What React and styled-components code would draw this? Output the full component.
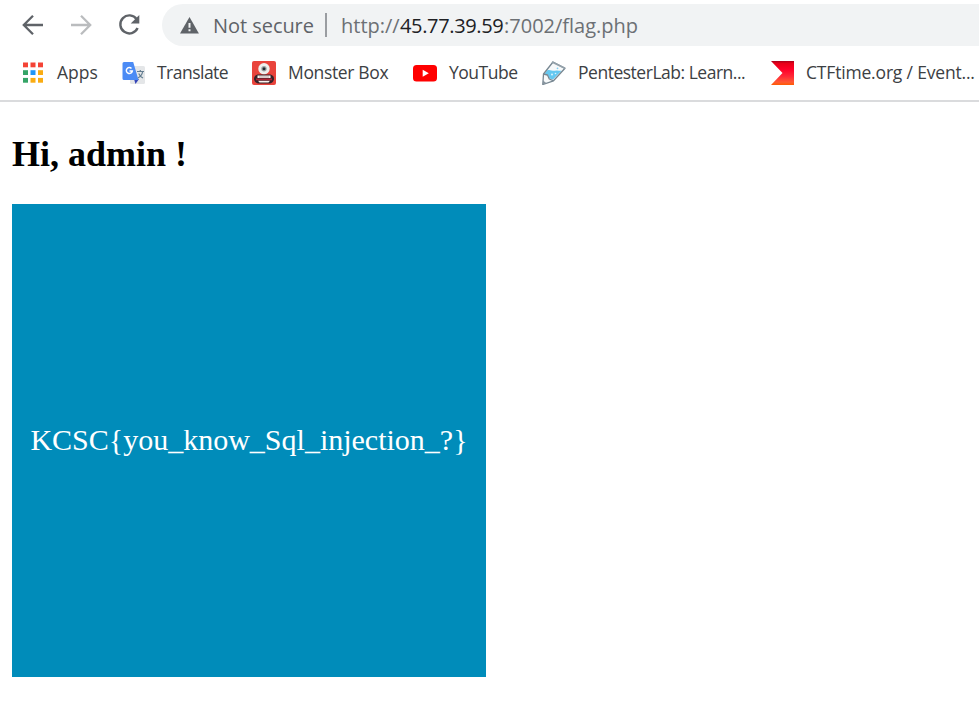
import React from 'react';
import styled, { createGlobalStyle } from 'styled-components';

const GlobalStyle = createGlobalStyle`
  * { box-sizing: border-box; }
  body { margin: 0; background: #fff; overflow: hidden; }
`;

const Window = styled.div`
  width: 979px;
  height: 710px;
  overflow: hidden;
  background: #fff;
  font-family: 'Open Sans', 'Noto Sans', sans-serif;
`;

const Toolbar = styled.div`
  display: flex;
  align-items: center;
  height: 50px;
  padding-left: 21px;
`;

const NavButton = styled.button`
  display: flex;
  width: 24px;
  height: 24px;
  margin-right: 24px;
  padding: 0;
  border: 0;
  background: none;
  flex: none;
  color: ${(p) => (p.$muted ? '#babcbe' : '#5f6368')};
`;

const AddressBar = styled.div`
  display: flex;
  align-items: center;
  flex: 1;
  height: 42px;
  margin-left: -3px;
  padding-left: 18px;
  border-radius: 21px 0 0 21px;
  background: #f1f3f4;
  color: #5f6368;
  font-size: 20px;
  line-height: 42px;
  white-space: nowrap;
`;

const Security = styled.span`
  width: 101px;
  margin-left: 9px;
  padding-top: 2px;
  letter-spacing: ${(p) => p.$spacing}px;
`;

const Divider = styled.span`
  width: 2px;
  height: 24px;
  margin: 0 14px 0 11px;
  background: #9a9da1;
`;

const UrlPart = styled.span`
  width: ${(p) => p.$width}px;
  padding-top: 2px;
  color: ${(p) => (p.$strong ? '#202124' : '#6c7074')};
  letter-spacing: ${(p) => p.$spacing}px;
`;

const Bookmarks = styled.nav`
  display: flex;
  align-items: center;
  gap: 24px;
  height: 52px;
  padding: 0 0 5px 21px;
  border-bottom: 2px solid #dadbdd;
`;

const Bookmark = styled.div`
  display: flex;
  align-items: center;
  gap: 12px;
  flex: none;
`;

const Label = styled.span`
  width: ${(p) => p.$width}px;
  padding-bottom: 2px;
  color: #3c4043;
  font-size: 17.5px;
  font-weight: 370;
  line-height: 22px;
  letter-spacing: ${(p) => p.$spacing}px;
  white-space: nowrap;
`;

const Icon = styled.svg`
  display: block;
  width: 24px;
  height: 24px;
  flex: none;
`;

const Page = styled.main`
  padding: 32px 12px 0;
  font-family: 'Liberation Serif', 'Times New Roman', serif;
`;

const Greeting = styled.h2`
  margin: 0 0 29px;
  font-size: 36px;
  line-height: 41px;
  color: #000;
`;

const FlagBox = styled.div`
  display: flex;
  align-items: center;
  justify-content: center;
  width: 474px;
  height: 473px;
  padding-bottom: 2px;
  background: #008cba;
  color: #fff;
  font-size: 30px;
  line-height: 34px;
  white-space: nowrap;
`;

const BackIcon = () => (
  <Icon viewBox="0 0 24 24" fill="none" stroke="currentColor" strokeWidth="2.3">
    <path d="M22 12H3.5M12 2.8 2.8 12l9.2 9.2" />
  </Icon>
);

const ForwardIcon = () => (
  <Icon viewBox="0 0 24 24" fill="none" stroke="currentColor" strokeWidth="2.3">
    <path d="M2 12h18.500M12 2.800 21.200 12 12 21.200" />
  </Icon>
);

const ReloadIcon = () => (
  <Icon viewBox="0 0 24 24">
    <path d="M19.700 6.200A9 9 0 1 0 20.600 15" fill="none" stroke="currentColor" strokeWidth="2.400" />
    <path d="M22.300 2v8.600h-8.600z" fill="currentColor" />
  </Icon>
);

const WarningIcon = () => (
  <Icon viewBox="0 0 24 24">
    <path d="M9.500 4 18.900 20.500H0z" fill="#5f6368" />
    <path d="M8.500 10h2v4.800h-2zM8.500 16.200h2v2h-2z" fill="#f1f3f4" />
  </Icon>
);

const appDots = [
  ['#f44336', '#f44336', '#f44336'],
  ['#34a466', '#1e96fa', '#faac12'],
  ['#34a466', '#faac12', '#faac12'],
];

const AppsIcon = () => (
  <Icon viewBox="0 0 24 24">
    {appDots.map((row, y) =>
      row.map((fill, x) => (
        <rect key={`${x}-${y}`} x={2 + x * 7.500} y={1.500 + y * 7.700} width="5" height="4.800" fill={fill} />
      ))
    )}
  </Icon>
);

const TranslateIcon = () => (
  <Icon viewBox="0 0 24 24">
    <rect x="9" y="5" width="15" height="18" rx="1.500" fill="#e4e6e8" />
    <path d="M13 18h5l-3.500 5z" fill="#3445b8" />
    <path d="M3 1h9.200l5.300 18H3a1.500 1.500 0 0 1-1.500-1.500v-15A1.500 1.500 0 0 1 3 1z" fill="#4b8bf5" />
    <path d="M10.500 7.400A3 3 0 1 0 11.300 10H8.500" fill="none" stroke="#fff" strokeWidth="1.500" />
    <path d="M16 10.500h7M19.300 9v1.500M21.700 10.500c-.5 3-2.200 5-4.700 6.500M17.700 12.500c.9 2 2.200 3.500 4.300 4.500" fill="none" stroke="#647e91" strokeWidth="1.200" />
  </Icon>
);

const MonsterIcon = () => (
  <Icon viewBox="0 0 24 24">
    <rect width="24" height="24" rx="2" fill="#e9433b" />
    <circle cx="12" cy="7.800" r="5.700" fill="#eef0ed" />
    <circle cx="12" cy="7.800" r="2.700" fill="#9ca2a3" />
    <circle cx="12" cy="7.800" r="1.500" fill="#222b31" />
    <path d="M5.500 13.500h13c2.800.8 4 3 3.300 5.500-.7 2-2.300 3.500-4.500 3.500H6.700c-2.200 0-3.800-1.500-4.500-3.500-.7-2.500.5-4.700 3.300-5.500z" fill="#342229" />
    <path d="M5.500 14.600h13v2.400h-13zM6 19.800h12l-1.500 1.800h-9z" fill="#faf3ef" />
    <path d="M4 17.500h16v1.800H4z" fill="#b02434" />
    <path d="M8 14.600V17m2-2.400V17m2-2.400V17m2-2.400V17m2-2.400V17" stroke="#503037" strokeWidth=".4" />
  </Icon>
);

const YouTubeIcon = () => (
  <Icon viewBox="0 0 24 24">
    <rect y="4" width="24" height="16.500" rx="3.500" fill="#f00" />
    <path d="m9.700 8.700 6.100 3.500-6.100 3.500z" fill="#fff" />
  </Icon>
);

const PentesterIcon = () => (
  <Icon viewBox="0 0 24 24" strokeLinejoin="round">
    <path d="M11 1 23 7.300 11.500 20 .8 23.500 1.500 13z" fill="#f7f9fa" />
    <path d="M5 9.500c3-1.500 5 .8 8 .3 2.500-.8 4.500.2 6.500 0L11 18.500l-3.500-1-1.800-3.800-3-.9z" fill="#64c8f1" />
    <path d="M11 1 23 7.300 11.500 19.800.8 23.500 1.500 13zM1.500 13l4 1 1.800 4 4.200 1.800" fill="none" stroke="#778792" strokeWidth="1.300" />
    <path d="m10 1 13 6.300" stroke="#94a1aa" strokeWidth="1.800" />
    <path d="m1 19.500 3.500 2.800L.8 23.500z" fill="#87949e" />
    <circle cx="10" cy="13.500" r="1" fill="#d8f4ff" />
    <circle cx="13.500" cy="12.500" r=".8" fill="#d8f4ff" />
    <circle cx="15.500" cy="7.300" r=".9" fill="#80d0f3" />
  </Icon>
);

const CtfIcon = () => (
  <Icon viewBox="0 0 24 24">
    <defs>
      <linearGradient id="flame" x1="0" y1="0" x2="0" y2="1">
        <stop offset="0" stopColor="#a9001c" />
        <stop offset=".1" stopColor="#e80018" />
        <stop offset=".35" stopColor="#ff0028" />
        <stop offset=".65" stopColor="#ff2a38" />
        <stop offset=".88" stopColor="#ff5a32" />
        <stop offset="1" stopColor="#ff5a00" />
      </linearGradient>
    </defs>
    <path d="M1 0h23v24H1l11.500-12z" fill="url(#flame)" />
  </Icon>
);

const bookmarks = [
  { label: 'Apps', width: 40, spacing: 0, Glyph: AppsIcon },
  { label: 'Translate', width: 71, spacing: -0.52, Glyph: TranslateIcon },
  { label: 'Monster Box', width: 101, spacing: -0.35, Glyph: MonsterIcon },
  { label: 'YouTube', width: 69, spacing: -0.48, Glyph: YouTubeIcon },
  { label: 'PentesterLab: Learn...', width: 168, spacing: -0.48, Glyph: PentesterIcon },
  { label: 'CTFtime.org / Event...', width: 170, spacing: -0.18, Glyph: CtfIcon },
];

export default function App() {
  return (
    <Window>
      <GlobalStyle />
      <Toolbar>
        <NavButton aria-label="Back"><BackIcon /></NavButton>
        <NavButton aria-label="Forward" $muted><ForwardIcon /></NavButton>
        <NavButton aria-label="Reload"><ReloadIcon /></NavButton>
        <AddressBar>
          <WarningIcon />
          <Security $spacing={-0.05}>Not secure</Security>
          <Divider />
          <UrlPart $width={59} $spacing={0}>http://</UrlPart>
          <UrlPart $width={104} $spacing={-0.35} $strong>45.77.39.59</UrlPart>
          <UrlPart $width={134} $spacing={0}>:7002/flag.php</UrlPart>
        </AddressBar>
      </Toolbar>
      <Bookmarks>
        {bookmarks.map(({ label, width, spacing, Glyph }) => (
          <Bookmark key={label}>
            <Glyph />
            <Label $width={width} $spacing={spacing}>{label}</Label>
          </Bookmark>
        ))}
      </Bookmarks>
      <Page>
        <Greeting>Hi, admin !</Greeting>
        <FlagBox>KCSC&#123;you_know_Sql_injection_?&#125;</FlagBox>
      </Page>
    </Window>
  );
}
